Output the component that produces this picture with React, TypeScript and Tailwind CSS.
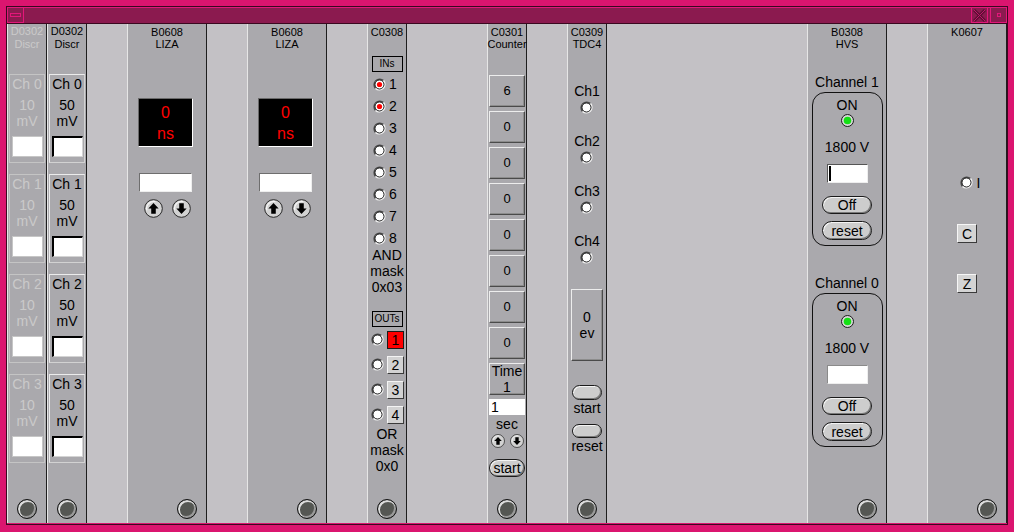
import type { ReactNode } from 'react';

// Motif-style crate window: hot pink frame, modules sitting in 40px slots.

function Knob() {
  return (
    <div className="h-[20px] w-[20px] rounded-full border border-[#151515] bg-[#555753] shadow-[inset_1px_1px_0_1px_#dcdcdc,inset_-1px_-1px_0_1px_#9a9a9a]" />
  );
}

function Radio({ on }: { on?: boolean }) {
  return (
    <svg width="13" height="13" viewBox="0 0 13 13" className="shrink-0">
      <path d="M2.55 10.45 A5.6 5.6 0 0 1 10.45 2.55" fill="none" stroke="#4a4a4a" strokeWidth="1.6" />
      <path d="M10.45 2.55 A5.6 5.6 0 0 1 2.55 10.45" fill="none" stroke="#f2f2f2" strokeWidth="1.6" />
      <circle cx="6.5" cy="6.5" r="4.5" fill="#fff" stroke="#111" strokeWidth="0.9" />
      {on && <circle cx="6.5" cy="6.5" r="2.6" fill="#ff0000" />}
    </svg>
  );
}

function Led() {
  return (
    <svg width="13" height="13" viewBox="0 0 13 13">
      <circle cx="6.5" cy="6.5" r="6" fill="#d8d8d8" stroke="#1a1a1a" strokeWidth="1" />
      <circle cx="6.5" cy="6.5" r="3.8" fill="#14e014" />
    </svg>
  );
}

function ArrowBtn({ down, size = 19 }: { down?: boolean; size?: number }) {
  return (
    <svg width={size} height={size} viewBox="0 0 20 20" className="shrink-0">
      <circle cx="10" cy="10" r="9.3" fill="#d2d2d2" stroke="#222" strokeWidth="1" />
      <path d="M3 12 A7.5 7.5 0 0 1 12 2.8" fill="none" stroke="#f4f4f4" strokeWidth="1.4" />
      <path
        d={
          down
            ? 'M10 15.8 L15.4 10 H12.4 V4.6 H7.6 V10 H4.6 Z'
            : 'M10 4.2 L15.4 10 H12.4 V15.4 H7.6 V10 H4.6 Z'
        }
        fill="#000"
      />
    </svg>
  );
}

function Pill({ children, className }: { children?: ReactNode; className: string }) {
  return (
    <div
      className={`flex items-center justify-center rounded-full border border-[#1a1a1a] bg-[#cdcdcd] text-[14px] leading-none shadow-[inset_1px_1px_0_#f4f4f4,inset_-1px_-1px_0_#7a7a7a] ${className}`}
    >
      {children}
    </div>
  );
}

const bevel =
  'border border-t-[#ededed] border-l-[#ededed] border-b-[#4a4a4a] border-r-[#4a4a4a] shadow-[inset_-1px_-1px_0_#8c8c8c]';

function Module({ wide, children }: { wide?: boolean; children: ReactNode }) {
  return (
    <div
      className={`flex h-full shrink-0 flex-col border-l border-r border-l-[#e6e6e6] border-r-[#1e1e1e] bg-[#aaa9ad] ${
        wide ? 'w-[80px]' : 'w-[40px]'
      }`}
    >
      <div className="flex flex-1 flex-col items-center">{children}</div>
      <div className={`mb-[4px] flex ${wide ? 'justify-end pr-[9px]' : 'justify-center'}`}>
        <Knob />
      </div>
    </div>
  );
}

function Gap({ w }: { w: string }) {
  return <div className={`h-full shrink-0 ${w}`} />;
}

function Discr({ dim, mv }: { dim?: boolean; mv: string }) {
  const txt = dim ? 'text-[#cacaca]' : 'text-black';
  return (
    <Module>
      <div className={`pt-[1px] text-center text-[11px] leading-[13px] ${txt}`}>
        D0302
        <br />
        Discr
      </div>
      <div className="mt-[23px] flex flex-col gap-[11px]">
        {[0, 1, 2, 3].map((i) => (
          <div
            key={i}
            className={`flex h-[89px] w-[36px] flex-col items-center border ${txt} ${
              dim
                ? 'border-[#c4c4c4]'
                : 'border-t-[#ececec] border-l-[#ececec] border-b-[#d2d2d2] border-r-[#d2d2d2]'
            }`}
          >
            <div className="pt-[1px] text-[14px] leading-[16px]">Ch {i}</div>
            <div className="mt-[5px] text-[14px] leading-[16px]">{mv}</div>
            <div className="text-[14px] leading-[16px]">mV</div>
            <div
              className={`mt-[7px] h-[21px] w-[31px] bg-white ${
                dim
                  ? 'border border-[#c6c6c6]'
                  : 'border-t-2 border-l-2 border-b border-r border-t-black border-l-black border-b-[#d4d4d4] border-r-[#d4d4d4]'
              }`}
            />
          </div>
        ))}
      </div>
    </Module>
  );
}

function Liza() {
  return (
    <Module wide>
      <div className="pt-[2px] text-center text-[11px] leading-[12px]">
        B0608
        <br />
        LIZA
      </div>
      <div className="ml-[10px] mt-[48px] flex h-[49px] w-[55px] flex-col items-center justify-center self-start border border-t-[#6a6a6a] border-l-[#6a6a6a] border-b-white border-r-white bg-black text-[16px] leading-[21px] text-[#ff0000]">
        <span>0</span>
        <span>ns</span>
      </div>
      <div className="ml-[11px] mt-[26px] h-[19px] w-[53px] self-start border border-t-[#6e6e6e] border-l-[#6e6e6e] border-b-[#eeeeee] border-r-[#eeeeee] bg-white" />
      <div className="mt-[7px] flex gap-[9px]">
        <ArrowBtn />
        <ArrowBtn down />
      </div>
    </Module>
  );
}

function Logic() {
  const tag =
    'flex h-[16px] w-[31px] items-center justify-center border border-black text-[10px] leading-none';
  return (
    <Module>
      <div className="pt-[2px] text-[11px] leading-[12px]">C0308</div>
      <div className={`mt-[18px] ${tag}`}>INs</div>
      <div className="mt-[1px] flex flex-col self-start pl-[5px]">
        {[1, 2, 3, 4, 5, 6, 7, 8].map((n) => (
          <div key={n} className="flex h-[22px] items-center gap-[3px]">
            <Radio on={n <= 2} />
            <span className="text-[14px] leading-[16px]">{n}</span>
          </div>
        ))}
      </div>
      <div className="-mt-[2px] text-center text-[14px] leading-[16px]">
        AND
        <br />
        mask
        <br />
        0x03
      </div>
      <div className={`mt-[16px] ${tag}`}>OUTs</div>
      <div className="flex flex-col self-start pl-[3px]">
        {[1, 2, 3, 4].map((n) => (
          <div key={n} className="flex h-[25px] items-center gap-[3px]">
            <Radio />
            <div
              className={`flex h-[18px] w-[17px] items-center justify-center text-[14px] leading-none ${
                n === 1
                  ? 'border border-[#1a1a1a] bg-[#ff0000]'
                  : 'border border-t-[#f4f4f4] border-l-[#f4f4f4] border-b-[#3a3a3a] border-r-[#3a3a3a] bg-[#d2d2d2]'
              }`}
            >
              {n}
            </div>
          </div>
        ))}
      </div>
      <div className="-mt-[1px] text-center text-[14px] leading-[16px]">
        OR
        <br />
        mask
        <br />
        0x0
      </div>
    </Module>
  );
}

function Counter() {
  const values = ['6', '0', '0', '0', '0', '0', '0', '0'];
  return (
    <Module>
      <div className="pt-[2px] text-center text-[11px] leading-[12px]">
        C0301
        <br />
        Counter
      </div>
      <div className="mt-[25px] flex flex-col gap-[4px]">
        {values.map((v, i) => (
          <div key={i} className={`flex h-[32px] w-[36px] items-center justify-center text-[13px] ${bevel}`}>
            {v}
          </div>
        ))}
        <div className={`flex h-[32px] w-[36px] flex-col items-center justify-center text-[14px] leading-[16px] ${bevel}`}>
          <span>Time</span>
          <span>1</span>
        </div>
      </div>
      <div className="mt-[4px] h-[16px] w-[36px] bg-white pl-[2px] text-[14px] leading-[16px]">1</div>
      <div className="mt-[1px] text-[14px] leading-[16px]">sec</div>
      <div className="mt-[2px] flex gap-[5px]">
        <ArrowBtn size={14} />
        <ArrowBtn size={14} down />
      </div>
      <Pill className="mt-[11px] h-[18px] w-[36px]">start</Pill>
    </Module>
  );
}

function Tdc() {
  return (
    <Module>
      <div className="pt-[2px] text-center text-[11px] leading-[12px]">
        C0309
        <br />
        TDC4
      </div>
      <div className="mt-[33px] flex flex-col items-center">
        {[1, 2, 3, 4].map((n) => (
          <div key={n} className="flex h-[50px] flex-col items-center">
            <span className="text-[14px] leading-[16px]">Ch{n}</span>
            <div className="mt-[2px]">
              <Radio />
            </div>
          </div>
        ))}
      </div>
      <div className={`mt-[6px] flex h-[72px] w-[32px] flex-col items-center justify-center text-[14px] leading-[16px] ${bevel}`}>
        <span>0</span>
        <span>ev</span>
      </div>
      <Pill className="mt-[24px] h-[15px] w-[30px]" />
      <div className="text-[14px] leading-[16px]">start</div>
      <Pill className="mt-[8px] h-[14px] w-[30px]" />
      <div className="text-[14px] leading-[16px]">reset</div>
    </Module>
  );
}

function HvChannel({ cursor }: { cursor?: boolean }) {
  return (
    <div className="mt-[2px] flex h-[154px] w-[71px] flex-col items-center rounded-[13px] border border-[#111]">
      <div className="pt-[4px] text-[14px] leading-[16px]">ON</div>
      <div className="mt-[1px] flex">
        <Led />
      </div>
      <div className="mt-[12px] text-[14px] leading-[16px]">1800 V</div>
      <div
        className={`mt-[9px] flex h-[19px] w-[41px] items-center border bg-white ${
          cursor
            ? 'border-t-[#555] border-l-[#555] border-b-[#eee] border-r-[#eee]'
            : 'border-t-[#8a8a8a] border-l-[#8a8a8a] border-b-[#eeeeee] border-r-[#eeeeee]'
        }`}
      >
        {cursor && <div className="ml-[1px] h-[15px] w-[2px] bg-black" />}
      </div>
      <Pill className="mt-[13px] h-[18px] w-[50px]">Off</Pill>
      <Pill className="mt-[7px] h-[19px] w-[50px]">reset</Pill>
    </div>
  );
}

function Hvs() {
  return (
    <Module wide>
      <div className="pt-[2px] text-center text-[11px] leading-[12px]">
        B0308
        <br />
        HVS
      </div>
      <div className="mt-[24px] text-[14px] leading-[16px]">Channel 1</div>
      <HvChannel cursor />
      <div className="mt-[29px] text-[14px] leading-[16px]">Channel 0</div>
      <HvChannel />
    </Module>
  );
}

function Kk() {
  const btn = `flex h-[19px] w-[20px] items-center justify-center bg-[#d4d4d4] text-[14px] leading-none border border-t-[#f6f6f6] border-l-[#f6f6f6] border-b-[#3a3a3a] border-r-[#3a3a3a]`;
  return (
    <Module wide>
      <div className="pt-[2px] text-[11px] leading-[12px]">K0607</div>
      <div className="ml-[6px] mt-[138px] flex h-[13px] items-center gap-[4px]">
        <Radio />
        <span className="text-[14px] leading-[12px]">I</span>
      </div>
      <div className={`mt-[35px] ${btn}`}>C</div>
      <div className={`mt-[31px] ${btn}`}>Z</div>
    </Module>
  );
}

function TitleBar() {
  return (
    <div className="flex h-[17px] border-b border-b-[#3a0820] bg-[#8b1a4f]">
      <div className="flex h-full w-[17px] items-center justify-center border border-[#e2177a]">
        <div className="h-[4px] w-[11px] border border-[#e2177a] bg-[#8b1a4f]" />
      </div>
      <div className="h-full flex-1 border-t border-t-[#e2177a]" />
      <div className="flex h-full w-[17px] items-center justify-center border border-[#e2177a]">
        <svg width="13" height="13" viewBox="0 0 13 13">
          <path d="M1 1 L12 12 M12 1 L1 12" stroke="#5c0d33" strokeWidth="3" />
          <path d="M1 1 L12 12 M12 1 L1 12" stroke="#c0186a" strokeWidth="1" />
        </svg>
      </div>
      <div className="w-[2px] border-t border-t-[#e2177a]" />
      <div className="flex h-full w-[17px] items-center justify-center border border-[#e2177a]">
        <div className="h-[4px] w-[4px] border border-[#e2177a]" />
      </div>
    </div>
  );
}

export default function App() {
  return (
    <div className="h-[532px] w-[1014px] overflow-hidden bg-[#db156f] p-[6px] pb-[7px] font-['Liberation_Sans',Arial,sans-serif] text-black select-none">
      <div className="flex h-full flex-col border border-[#3a0820]">
        <TitleBar />
        <div className="flex h-[499px] bg-[#c3c1c5]">
          <Discr dim mv="10" />
          <Discr mv="50" />
          <Gap w="w-[40px]" />
          <Liza />
          <Gap w="w-[40px]" />
          <Liza />
          <Gap w="w-[40px]" />
          <Logic />
          <Gap w="w-[80px]" />
          <Counter />
          <Gap w="w-[40px]" />
          <Tdc />
          <Gap w="w-[200px]" />
          <Hvs />
          <Gap w="w-[40px]" />
          <Kk />
        </div>
      </div>
    </div>
  );
}
